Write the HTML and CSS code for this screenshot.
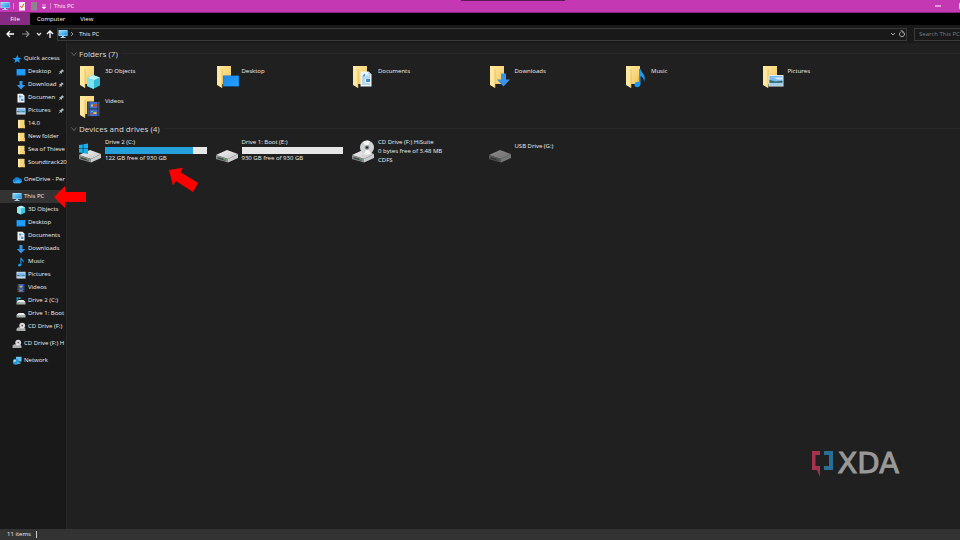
FILE: index.html
```html
<!DOCTYPE html>
<html lang="en">
<head>
  <meta charset="UTF-8">
  <title>This PC</title>
  <link rel="stylesheet" href="styles.css">
</head>
<body>
  <!-- shared icons -->
  <svg class="defs" aria-hidden="true">
    <defs>
      <linearGradient id="gFolder" x1="0" y1="0" x2="1" y2="1">
        <stop offset="0" stop-color="#ffe9a3"/><stop offset="1" stop-color="#f3c85c"/>
      </linearGradient>
      <linearGradient id="gScreen" x1="0" y1="0" x2="1" y2="1">
        <stop offset="0" stop-color="#1c86e8"/><stop offset="1" stop-color="#1fa4ff"/>
      </linearGradient>
      <linearGradient id="gPc" x1="0" y1="0" x2="1" y2="1">
        <stop offset="0" stop-color="#8fdcff"/><stop offset="1" stop-color="#1c8fe0"/>
      </linearGradient>
      <linearGradient id="gDrive" x1="0" y1="0" x2="1" y2="1">
        <stop offset="0" stop-color="#f4f4f4"/><stop offset="1" stop-color="#c4c4c4"/>
      </linearGradient>
      <symbol id="pc" viewBox="0 0 10 10">
        <path d="M0.5 1h9v6h-9z" fill="#bfe6fb"/>
        <path d="M1 1.5h8v5H1z" fill="url(#gPc)"/>
        <path d="M4 7h2v1H4zM2.500 8h5v1h-5z" fill="#9fd3ef"/>
      </symbol>
      <symbol id="star" viewBox="0 0 10 10">
        <path d="M5.500 1l1 2.800 3 .2-2.400 1.800.7 3L5.200 7.200 2.400 9l.8-3L.5 4.200l3.300-.3z" fill="#1e9bf0"/>
      </symbol>
      <symbol id="desktop" viewBox="0 0 10 10">
        <path d="M.5 2h9v6.500h-9z" fill="#1488e8"/><path d="M1 2.500h8v5H1z" fill="#1ea0ff"/>
      </symbol>
      <symbol id="download" viewBox="0 0 10 10">
        <path d="M3.500 1h3v4h2.700L5 9.400.8 5h2.700z" fill="#3495ea"/>
      </symbol>
      <symbol id="doc" viewBox="0 0 10 10">
        <path d="M1.500.800h5l2 2v6.600h-7z" fill="#f1f6fa"/>
        <path d="M3 2.500h2.500v2H3zM5 6h2.500v2H5z" fill="#4fa0d8"/>
        <path d="M3 5.200h4.500M3 6.500h1.500M3 8h1.500M6 3.500h1.500" stroke="#88b5d3" stroke-width=".6"/>
      </symbol>
      <symbol id="picture" viewBox="0 0 10 10">
        <path d="M.5 1.800h9v6.700h-9z" fill="#e9eff5"/><path d="M1.200 2.500h7.600v5.300H1.200z" fill="#7cbdf0"/>
        <path d="M1.200 5l3 .8 4.600-.6v1H1.200z" fill="#245d66"/><path d="M1.200 6.500h7.600v1.300H1.200z" fill="#c5ddec"/>
      </symbol>
      <symbol id="folder" viewBox="0 0 10 10">
        <path d="M2 .800h6.500v8.400H2z" fill="#f7d77c"/><path d="M2 .8l2 1v7.700l-2-1z" fill="#ffe9a8"/><path d="M7.500 6h1.500v3.200H7.500z" fill="#e9bd57"/>
      </symbol>
      <symbol id="cloud" viewBox="0 0 10 10">
        <path d="M2.600 8.200a2.200 2.200 0 0 1-.4-4.300 3 3 0 0 1 5.300-.3 2.300 2.300 0 0 1 .5 4.600z" fill="#1683dc"/>
        <path d="M1.200 7.700l5-2.700 3.100 1.500a2 2 0 0 1-1.300 1.700H2.500z" fill="#38aaf2"/>
      </symbol>
      <symbol id="cube" viewBox="0 0 10 10">
        <path d="M5 .800l4 1.400v5.500L5 9.400 1 7.700V2.200z" fill="#3fc3dd"/>
        <path d="M1 2.200l4 1.300v5.900L1 7.700z" fill="#8ce9f4"/><path d="M5 .800l4 1.400-4 1.300-4-1.300z" fill="#bdf5fa"/>
      </symbol>
      <symbol id="note" viewBox="0 0 10 10">
        <path d="M4.400.800h1c.3 2 3.400 2.200 2 5.200-.1-1.500-.9-2.200-2-2.500v4.200c0 2-3 2.200-3.300.8-.2-1.300 1.200-2 2.300-1.600z" fill="#169cf5"/>
      </symbol>
      <symbol id="film" viewBox="0 0 10 10">
        <path d="M1.500 1h7v8.300h-7z" fill="#2a3346"/><path d="M3 1.300h4v3.400H3z" fill="#3f7be0"/><path d="M3 5.200h4v3.800H3z" fill="#3f66c2"/>
        <path d="M4 3h2v1.500H4z" fill="#e6a83a"/><path d="M3.500 7h2v1.500h-2z" fill="#d6762d"/>
        <path d="M2.200 1.500v7.500M7.800 1.500v7.500" stroke="#9aa7b8" stroke-width=".6" stroke-dasharray=".8 .8"/>
      </symbol>
      <symbol id="disk" viewBox="0 0 10 10">
        <path d="M2.500 4h5L9.500 6h-9z" fill="#ececec"/><path d="M.5 6h9v2.500h-9z" fill="#aeb2b2"/><path d="M1.500 7h1.500v.7H1.500z" fill="#37b34a"/>
      </symbol>
      <symbol id="windisk" viewBox="0 0 10 10">
        <use href="#disk"/><path d="M.5 1.500h1.800v1.600H.5zM2.600 1.300h2v1.800h-2zM.5 3.400h1.800V5H.5z" fill="#1cb4ee"/>
      </symbol>
      <symbol id="cd" viewBox="0 0 10 10">
        <circle cx="6.200" cy="3.600" r="2.900" fill="#dadada"/><circle cx="6.200" cy="3.600" r=".8" fill="#555"/>
        <path d="M2 5.500h6l1.500 1.300h-9z" fill="#ececec"/><path d="M.5 6.800h9V9h-9z" fill="#a8acac"/>
      </symbol>
      <symbol id="network" viewBox="0 0 10 10">
        <path d="M4 .8h5.500v4.700H4z" fill="#64c3f2"/><circle cx="3.800" cy="5.800" r="3" fill="#299bd9"/>
        <path d="M1.500 4.500c1-1.200 2-.7 2.500 0S3 6 2 6z" fill="#a5e3fb"/><path d="M5.500 6.500h3v1.200h-3z" fill="#8acbe9"/>
      </symbol>
      <symbol id="pin" viewBox="0 0 8 8">
        <path d="M4.500 1l2.500 2.500-.6.500-.4-.2L4.600 5.200 4.400 6.400 3.500 6.600 1.400 4.500l.3-.8 1.100-.2L4.300 2z" fill="#a9b4bd"/><path d="M2.800 5.200L.9 7.200" stroke="#a9b4bd" stroke-width=".8"/>
      </symbol>
      <symbol id="bigfolder" viewBox="0 0 24 24">
        <path d="M2 1h14v18H2z" fill="url(#gFolder)"/><path d="M14 11h2v8h-3z" fill="#e8bc52"/>
        <path d="M2 1l5 3v19l-5-3z" fill="#ffe79e"/><path d="M7 4v19" stroke="#d9ae4c" stroke-width=".6"/>
      </symbol>
      <symbol id="bigdrive" viewBox="0 0 24 24">
        <path d="M1 15l11-5 11 4-10 5z" fill="url(#gDrive)"/>
        <path d="M1 15l12 4v3.500L1 19z" fill="#8d9191"/><path d="M13 19l10-5v4l-10 4.500z" fill="#c9cccc"/>
        <path d="M2.500 17l8 2.600v1.300l-8-2.400z" fill="#3c4141"/><path d="M8.500 19.300h1.500v1H8.500z" fill="#38d04e"/>
      </symbol>
    </defs>
  </svg>

  <div class="window">
    <header class="titlebar">
      <svg class="icon"><use href="#pc"/></svg>
      <span class="sep"></span>
      <svg class="icon" viewBox="0 0 10 10"><path d="M2 1h6v8.500H2z" fill="#f6f0ee"/><path d="M3.300 5l1.400 1.800 2.300-4" fill="none" stroke="#d0532b"/></svg>
      <svg class="icon" viewBox="0 0 10 10"><path d="M2 1h6v8.500H2z" fill="#8c858d"/></svg>
      <svg class="caret" viewBox="0 0 6 10"><path d="M1 4h4M1.200 6h3.600L3 8z" fill="#fff" stroke="#fff" stroke-width=".6"/></svg>
      <span class="sep"></span>
      <h1>This PC</h1>
      <div class="controls">
        <button aria-label="Minimize"><svg viewBox="0 0 6 6"><path d="M0 3h6" stroke="#fff"/></svg></button>
        <button aria-label="Maximize"><svg viewBox="0 0 6 6"><path d="M.5.500h5v5h-5z" fill="none" stroke="#fff"/></svg></button>
      </div>
      <span class="handle"></span>
    </header>

    <nav class="tabs">
      <button class="file">File</button>
      <button>Computer</button>
      <button>View</button>
    </nav>

    <div class="navbar">
      <button aria-label="Back"><svg viewBox="0 0 10 10"><path d="M9 5H2M5 2L2 5l3 3" fill="none" stroke="#fff" stroke-width="1.300"/></svg></button>
      <button aria-label="Forward"><svg viewBox="0 0 10 10"><path d="M1 5h7M5 2l3 3-3 3" fill="none" stroke="#8b8b8b" stroke-width="1.200"/></svg></button>
      <button class="small" aria-label="Recent"><svg viewBox="0 0 10 10"><path d="M3 4l2 2 2-2" fill="none" stroke="#ddd" stroke-width="1.300"/></svg></button>
      <button aria-label="Up"><svg viewBox="0 0 10 10"><path d="M5 9V2M2 5l3-3 3 3" fill="none" stroke="#fff" stroke-width="1.300"/></svg></button>
      <div class="address">
        <svg class="icon"><use href="#pc"/></svg>
        <svg class="crumb" viewBox="0 0 6 6"><path d="M2 1l2 2-2 2" fill="none" stroke="#aaa" stroke-width=".9"/></svg>
        <a href="#">This PC</a>
        <button aria-label="Previous locations"><svg viewBox="0 0 10 10"><path d="M3 4l2 2 2-2" fill="none" stroke="#aaa"/></svg></button>
        <button aria-label="Refresh"><svg viewBox="0 0 10 10"><path d="M3.500 3.200a2.500 2.500 0 1 0 3 0M3.500 2h2.500v2.500" fill="none" stroke="#aaa"/></svg></button>
      </div>
      <input class="search" type="text" placeholder="Search This PC" aria-label="Search This PC">
    </div>

    <div class="body">
      <aside class="sidebar">
        <ul>
          <li><a href="#"><svg class="icon"><use href="#star"/></svg><span>Quick access</span></a></li>
          <li class="sub"><a href="#"><svg class="icon"><use href="#desktop"/></svg><span>Desktop</span><svg class="pin"><use href="#pin"/></svg></a></li>
          <li class="sub"><a href="#"><svg class="icon"><use href="#download"/></svg><span>Download</span><svg class="pin"><use href="#pin"/></svg></a></li>
          <li class="sub"><a href="#"><svg class="icon"><use href="#doc"/></svg><span>Documen</span><svg class="pin"><use href="#pin"/></svg></a></li>
          <li class="sub"><a href="#"><svg class="icon"><use href="#picture"/></svg><span>Pictures</span><svg class="pin"><use href="#pin"/></svg></a></li>
          <li class="sub"><a href="#"><svg class="icon"><use href="#folder"/></svg><span>14.0</span></a></li>
          <li class="sub"><a href="#"><svg class="icon"><use href="#folder"/></svg><span>New folder</span></a></li>
          <li class="sub"><a href="#"><svg class="icon"><use href="#folder"/></svg><span>Sea of Thieve</span></a></li>
          <li class="sub"><a href="#"><svg class="icon"><use href="#folder"/></svg><span>Soundtrack20</span></a></li>
        </ul>
        <ul>
          <li><a href="#"><svg class="icon"><use href="#cloud"/></svg><span>OneDrive - Per</span></a></li>
        </ul>
        <ul>
          <li class="active"><a href="#"><svg class="icon"><use href="#pc"/></svg><span>This PC</span></a></li>
          <li class="sub"><a href="#"><svg class="icon"><use href="#cube"/></svg><span>3D Objects</span></a></li>
          <li class="sub"><a href="#"><svg class="icon"><use href="#desktop"/></svg><span>Desktop</span></a></li>
          <li class="sub"><a href="#"><svg class="icon"><use href="#doc"/></svg><span>Documents</span></a></li>
          <li class="sub"><a href="#"><svg class="icon"><use href="#download"/></svg><span>Downloads</span></a></li>
          <li class="sub"><a href="#"><svg class="icon"><use href="#note"/></svg><span>Music</span></a></li>
          <li class="sub"><a href="#"><svg class="icon"><use href="#picture"/></svg><span>Pictures</span></a></li>
          <li class="sub"><a href="#"><svg class="icon"><use href="#film"/></svg><span>Videos</span></a></li>
          <li class="sub"><a href="#"><svg class="icon"><use href="#windisk"/></svg><span>Drive 2 (C:)</span></a></li>
          <li class="sub"><a href="#"><svg class="icon"><use href="#disk"/></svg><span>Drive 1: Boot</span></a></li>
          <li class="sub"><a href="#"><svg class="icon"><use href="#cd"/></svg><span>CD Drive (F:)</span></a></li>
        </ul>
        <ul>
          <li><a href="#"><svg class="icon"><use href="#cd"/></svg><span>CD Drive (F:) H</span></a></li>
        </ul>
        <ul>
          <li><a href="#"><svg class="icon"><use href="#network"/></svg><span>Network</span></a></li>
        </ul>
      </aside>

      <main class="content">
        <section>
          <h2><svg viewBox="0 0 8 8"><path d="M1.500 2.500L4 5.500l2.500-3" fill="none" stroke="#777" stroke-width=".8"/></svg>Folders (7)</h2>
          <div class="grid">
            <div class="item">
              <svg viewBox="0 0 24 24"><use href="#bigfolder"/><path d="M15 10l7 2.500v8L15 24l-6-3v-8z" fill="#35bdd6"/><path d="M9 13l7 2v9l-7-3z" fill="#7ce3f0"/><path d="M15 10l7 2.500-6 2.500-7-2z" fill="#b8f4fa"/></svg>
              <div class="text"><p>3D Objects</p></div>
            </div>
            <div class="item">
              <svg viewBox="0 0 24 24"><use href="#bigfolder"/><path d="M8 10.500h16v11H8z" fill="#1177d2"/><path d="M8.500 11h15v10h-15z" fill="url(#gScreen)"/></svg>
              <div class="text"><p>Desktop</p></div>
            </div>
            <div class="item">
              <svg viewBox="0 0 24 24"><use href="#bigfolder"/><path d="M9.500 6.500h8l3 3v12h-11z" fill="#eaf4fa"/><path d="M17.500 6.500v3h3z" fill="#aac7dc"/><path d="M11 11.500l3-3v3zM15 14h4v3h-4z" fill="#3a8fd0"/><path d="M11 13h8M11 15h3M11 17h3M11 19h8M15 11h4" stroke="#76acd3" stroke-width=".8"/></svg>
              <div class="text"><p>Documents</p></div>
            </div>
            <div class="item">
              <svg viewBox="0 0 24 24"><use href="#bigfolder"/><path d="M13 8.500h5v6h4l-6.500 7L9 14.500h4z" fill="#3794e8"/></svg>
              <div class="text"><p>Downloads</p></div>
            </div>
            <div class="item">
              <svg viewBox="0 0 24 24"><use href="#bigfolder"/><path d="M15 4h1.500c.5 4 6.500 6 3.500 13 0-3-1-5-3.500-6v8c0 4-6 4-6 1s2.500-3.500 4.500-3z" fill="#1b9bf4"/></svg>
              <div class="text"><p>Music</p></div>
            </div>
            <div class="item">
              <svg viewBox="0 0 24 24"><use href="#bigfolder"/><path d="M7.500 10h15v11.500h-15z" fill="#e6e9ed"/><path d="M8.500 11h13v9.500h-13z" fill="#79b8ef"/><path d="M8.500 13h5l3 1.500h5v-2h-6z" fill="#d8eefb"/><path d="M8.500 15l6 1.500 7-.8v2h-13z" fill="#28655f"/><path d="M8.500 18h13v2.500h-13z" fill="#a6cfe6"/></svg>
              <div class="text"><p>Pictures</p></div>
            </div>
            <div class="item">
              <svg viewBox="0 0 24 24"><use href="#bigfolder"/><path d="M9 6.500h13v15H9z" fill="#222b3b"/><path d="M11.500 7h8v6.500h-8zM11.500 14.500h8v6.500h-8z" fill="#3e6fd4"/><path d="M13 9.500h2v2h-2zM15.500 17h3v2h-3z" fill="#e7b63d"/><path d="M16 9h3v2.500h-3zM12.500 18h2v2h-2z" fill="#b35037"/><path d="M13 16h2v1h-2z" fill="#6cc36a"/><path d="M10.200 7.500V21M20.800 7.500V21" stroke="#8694a8" stroke-dasharray="1 1"/></svg>
              <div class="text"><p>Videos</p></div>
            </div>
          </div>
        </section>

        <section>
          <h2><svg viewBox="0 0 8 8"><path d="M1.500 2.500L4 5.500l2.500-3" fill="none" stroke="#777" stroke-width=".8"/></svg>Devices and drives (4)</h2>
          <div class="grid drives">
            <div class="item">
              <svg viewBox="0 0 24 24"><use href="#bigdrive"/><path d="M1 5l3.800-.6v4H1zM5.400 4.300L10 3.500v4.900H5.400zM1 9h3.800v4L1 12.400zM5.400 9H10v5l-4.600-.8z" fill="#16b1ee"/></svg>
              <div class="text">
                <p>Drive 2 (C:)</p>
                <div class="bar"><div class="fill" style="width: 87%"></div></div>
                <p>122 GB free of 930 GB</p>
              </div>
            </div>
            <div class="item">
              <svg viewBox="0 0 24 24"><use href="#bigdrive"/></svg>
              <div class="text">
                <p>Drive 1: Boot (E:)</p>
                <div class="bar"></div>
                <p>930 GB free of 930 GB</p>
              </div>
            </div>
            <div class="item">
              <svg viewBox="0 0 24 24"><use href="#bigdrive"/><circle cx="16" cy="7.500" r="7" fill="#cfd3d4"/><path d="M16 7.500L12 2a7 7 0 0 1 7-1zM16 7.500l4 5.800a7 7 0 0 1-7 .6z" fill="#f4f4f4"/><circle cx="16" cy="7.500" r="2.200" fill="#777d80"/><circle cx="16" cy="7.500" r="1" fill="#222"/></svg>
              <div class="text">
                <p>CD Drive (F:) HiSuite</p>
                <p>0 bytes free of 3.48 MB</p>
                <p>CDFS</p>
              </div>
            </div>
            <div class="item usb">
              <svg viewBox="0 0 24 24"><use href="#bigdrive"/></svg>
              <div class="text"><p>USB Drive (G:)</p></div>
            </div>
          </div>
        </section>
      </main>
    </div>

    <footer class="status"><span>11 items</span></footer>
  </div>

  <!-- callouts -->
  <svg class="arrow arrow-pc" viewBox="0 0 32 22"><path d="M0 11L11 0v6h21v10H11v6z" fill="#f00"/></svg>
  <svg class="arrow arrow-drive" viewBox="0 0 32 26"><path d="M2 3l14-2.300-2.300 4.500L31.300 16 26 25 9 14l-3 4.500z" fill="#f00"/></svg>

  <div class="watermark">
    <svg viewBox="0 0 22 28"><path d="M1 1h8v4H4.500v11H9v11L6 20H1z" fill="#a5324f"/><path d="M13 1h9v19h-9v-4h5V5h-5z" fill="#286f96"/></svg>
    <span>XDA</span>
  </div>
</body>
</html>
```
FILE: styles.css
```css
* { margin: 0; padding: 0; box-sizing: border-box; }
body {
  font-family: "Open Sans", "Noto Sans", sans-serif;
  font-size: 6px;
  line-height: 9px;
  color: #f0f0f0;
  background-color: #202020;
  overflow: hidden;
}
button, input { font: inherit; color: inherit; border: none; background: transparent; }
a { color: inherit; text-decoration: none; }
ul { list-style: none; }
.defs { position: absolute; width: 0; height: 0; }
.window {
  min-height: 100vh;
  display: flex;
  flex-direction: column;
}
.icon { width: 10px; height: 10px; flex: none; }

/* title bar */
.titlebar {
  position: relative;
  height: 13px;
  display: flex;
  align-items: center;
  gap: 2px;
  background-color: #c438b4;
  border-bottom: 1px solid #85257b;
  color: #fff;
  overflow: hidden;
}
.titlebar h1 { font-size: 6px; font-weight: 400; }
.caret { width: 6px; height: 10px; flex: none; }
.sep { width: 1px; height: 6px; margin: 0 1px; background-color: #d884cd; }
.handle {
  position: absolute;
  top: 0;
  left: 48%;
  width: 104px;
  height: 1px;
  background-color: #5b1c58;
}
.controls { margin-left: auto; margin-right: -5px; display: flex; gap: 18px; }
.controls button { display: flex; }
.controls svg { width: 6px; height: 6px; }

/* ribbon tabs */
.tabs { display: flex; height: 12px; background-color: #000; color: #fff; }
.tabs button { padding: 0 7px; }
.tabs .file { width: 30px; background-color: #862a83; }
.tabs button:last-child { margin-left: 1px; }

/* address row */
.navbar {
  height: 18px;
  display: flex;
  align-items: center;
  padding-left: 5px;
  background-color: #191919;
}
.navbar button { display: flex; margin-right: 6px; }
.navbar button svg { width: 10px; height: 10px; }
.navbar button.small { margin: 0 1px 0 -3px; }
.navbar button.small + button { margin-right: 2px; }
.address {
  flex: 1;
  height: 13px;
  display: flex;
  align-items: center;
  border: 1px solid #3a3a3a;
}
.address a { flex: 1; }
.address button { margin: 0 -1px 0 0; }
.crumb { width: 6px; height: 6px; margin: 0 4px 0 1px; }
.search {
  width: 46px;
  height: 13px;
  margin-left: 7px;
  padding-left: 4px;
  border: 1px solid #3a3a3a;
  border-right: none;
}
.search::placeholder { color: #7d7d7d; }

.body { flex: 1; display: flex; }

/* navigation tree */
.sidebar {
  width: 67px;
  padding-top: 9px;
  background-color: #191919;
  border-right: 1px solid #282828;
}
.sidebar ul { margin-bottom: 4px; }
.sidebar a {
  height: 13px;
  display: flex;
  align-items: center;
  gap: 2px;
  padding-left: 12px;
}
.sidebar .sub a { padding-left: 16px; }
.sidebar span { flex: 1; white-space: nowrap; }
.sidebar .active { background-color: #333; }
.pin { width: 7px; height: 7px; margin-right: 1px; }

/* file list */
.content { flex: 1; padding-top: 4px; }
.content h2 {
  height: 13px;
  display: flex;
  align-items: center;
  gap: 1px;
  padding-left: 3px;
  font-size: 8px;
  font-weight: 400;
  color: #dedede;
}
.content h2 svg { width: 8px; height: 8px; }
.content h2::after {
  content: "";
  flex: 1;
  height: 1px;
  margin-left: 3px;
  background-color: #282828;
}
.grid {
  display: grid;
  grid-template-columns: repeat(6, 1fr);
  padding: 2px 63px 0 11px;
}
.item { height: 30px; display: flex; gap: 3px; }
.item > svg { width: 24px; height: 24px; margin-top: 3px; flex: none; }
.item .text { flex: 1; padding-top: 5px; white-space: nowrap; }
.drives .text { padding: 1px 8px 0 0; }
.bar { height: 7px; background-color: #e6e6e6; }
.fill { height: 7px; background-color: #26a0da; }
.usb > svg { opacity: .5; }
.drives .usb .text { padding-top: 5px; }

.status {
  height: 11px;
  padding-left: 7px;
  display: flex;
  align-items: center;
  background-color: #333;
}
.status span { padding-right: 5px; border-right: 1px solid #ccc; line-height: 7px; }

.arrow { position: absolute; }
.arrow-pc { left: 54px; top: 186px; width: 32px; height: 22px; }
.arrow-drive { left: 167px; top: 167px; width: 32px; height: 26px; }

.watermark {
  position: absolute;
  right: 61px;
  bottom: 62px;
  display: flex;
  align-items: center;
  gap: 4px;
  font-family: "DejaVu Sans", sans-serif;
  font-size: 29px;
  line-height: 29px;
  color: #999;
  -webkit-text-stroke: 1px #999;
}
.watermark svg { width: 22px; height: 28px; }
```
